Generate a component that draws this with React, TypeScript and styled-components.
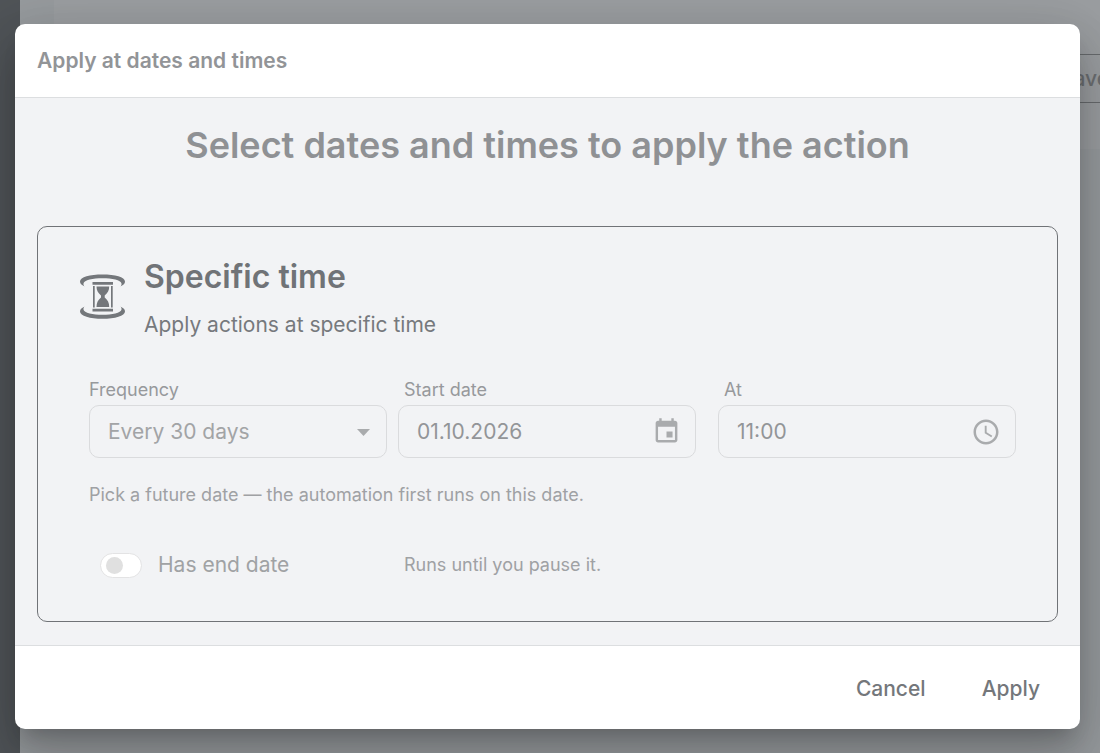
import React from "react";
import styled, { createGlobalStyle } from "styled-components";

const GlobalStyle = createGlobalStyle`
  *, *::before, *::after { box-sizing: border-box; }
  body {
    margin: 0;
    font-family: Inter, "Liberation Sans", sans-serif;
    background: #999da0;
    -webkit-font-smoothing: antialiased;
  }
  h1, h2, h3, p { margin: 0; }
  button, input, select { font-family: inherit; }
`;

const Page = styled.div`
  display: flex;
  min-height: 100vh;
`;

const SideRail = styled.nav`
  flex: 0 0 20px;
  background: #505458;
`;

const Workspace = styled.main`
  flex: 1;
  min-width: 0;
  background: #979b9e;
`;

const Toolbar = styled.div`
  display: flex;
  justify-content: flex-end;
  height: 149px;
  margin-left: 34px;
  padding-top: 54px;
  overflow: hidden;
  background: #9b9ea1;
`;

const SaveButton = styled.button`
  flex: none;
  height: 49px;
  margin-right: -32px;
  padding: 0 22px;
  border: 1px solid #686b6e;
  border-radius: 6px;
  background: transparent;
  color: #6c6f72;
  font-size: 21px;
  font-weight: 500;
`;

const Backdrop = styled.div`
  position: absolute;
  inset: 0;
  display: flex;
  align-items: flex-start;
  padding: 24px 20px 24px 15px;
`;

const Dialog = styled.section`
  flex: 1;
  min-width: 0;
  overflow: hidden;
  border-radius: 10px;
  background: #ffffff;
  box-shadow:
    0 14px 20px -9px rgba(0, 0, 0, 0.2),
    0 31px 49px 4px rgba(0, 0, 0, 0.14),
    0 12px 60px 10px rgba(0, 0, 0, 0.12);
`;

const DialogHeader = styled.header`
  padding: 22px 22px 21px;
  border-bottom: 1px solid #dcdee0;
`;

const DialogTitle = styled.h1`
  color: #929497;
  font-size: 21px;
  font-weight: 600;
  line-height: 30px;
`;

const DialogBody = styled.div`
  padding: 23px 22px;
  background: #f2f3f5;
`;

const Headline = styled.h2`
  margin-bottom: 57px;
  color: #8f9194;
  font-size: 36px;
  font-weight: 600;
  line-height: 48px;
  text-align: center;
`;

const Card = styled.section`
  padding: 25px 41px 42px 40px;
  border: 1px solid #707377;
  border-radius: 10px;
`;

const CardHeader = styled.div`
  display: flex;
  align-items: flex-start;
  gap: 16px;

  svg {
    margin-top: 20px;
  }
`;

const CardTitle = styled.h3`
  color: #707377;
  font-size: 32px;
  font-weight: 600;
  line-height: 50px;
`;

const CardText = styled.p`
  color: #76797d;
  font-size: 21px;
  line-height: 46px;
`;

const Fields = styled.div`
  display: flex;
  gap: 11px;
  margin: 29px 0 0 11px;
`;

const DateTime = styled.div`
  display: flex;
  flex: 2 1 22px;
  gap: 22px;
`;

const Field = styled.div`
  flex: 1 1 0;
  min-width: 0;
`;

const Label = styled.label<{ $inset?: boolean }>`
  display: block;
  padding: 0 0 2px ${(p) => (p.$inset ? 6 : 0)}px;
  color: #97999c;
  font-size: 18px;
  line-height: 26px;
`;

const Control = styled.div`
  display: flex;
  align-items: center;
  height: 53px;
  position: relative;
  border: 1px solid #dadbdd;
  border-radius: 10px;

  svg {
    position: absolute;
    right: 14px;
    color: #a9abad;
    pointer-events: none;
  }
`;

const Select = styled.select`
  width: 100%;
  height: 100%;
  padding: 0 50px 0 18px;
  border: 0;
  appearance: none;
  background: transparent;
  color: #a2a4a6;
  font-size: 21px;
  opacity: 1;
`;

const TextInput = styled.input`
  width: 100%;
  height: 100%;
  padding: 0 50px 0 18px;
  border: 0;
  background: transparent;
  color: #939598;
  font-size: 21px;
`;

const Note = styled.p`
  color: #9fa1a4;
  font-size: 18px;
  line-height: 28px;
`;

const FieldNote = styled(Note)`
  margin: 23px 0 42px 11px;
`;

const EndRow = styled.div`
  display: flex;
  align-items: center;
`;

const SwitchLabel = styled.label`
  display: flex;
  flex: 0 0 326px;
  align-items: center;
  gap: 16px;
  padding-left: 22px;
  color: #a0a2a4;
  font-size: 21px;
  line-height: 28px;
`;

const Switch = styled.input`
  display: flex;
  align-items: center;
  width: 42px;
  height: 25px;
  margin: 0;
  padding: 0 5px;
  appearance: none;
  border: 1px solid #e3e3e4;
  border-radius: 13px;
  background: #ffffff;

  &::before {
    content: "";
    width: 17px;
    height: 17px;
    border-radius: 50%;
    background: #e0e0e0;
  }

  &:checked {
    justify-content: flex-end;
  }
`;

const DialogFooter = styled.footer`
  display: flex;
  justify-content: flex-end;
  gap: 16px;
  padding: 18px 20px 17px;
  border-top: 1px solid #dcdee0;
`;

const TextButton = styled.button`
  height: 48px;
  padding: 0 20px;
  border: 0;
  background: transparent;
  color: #74777b;
  font-size: 21px;
  font-weight: 500;
`;

const HourglassIcon = () => (
  <svg width="50" height="50" viewBox="0 0 50 50" fill="#74777b" aria-hidden="true">
    <path d="M6.500 14.500C3.500 13 2 11.500 2 9.500 2 5 12 2.500 24.500 2.500S47 5 47 9.500c0 2-1.500 3.500-4.500 5 .8-1.200 1.200-2 1-3C43 8 34 6.300 24.500 6.300S6 8 5.500 11.500c-.2 1 .2 1.800 1 3Z" />
    <path d="M6.500 34.500C3.500 36 2 37.500 2 39.500 2 44 12 46.800 24.500 46.800S47 44 47 39.500c0-2-1.500-3.500-4.500-5 .8 1.200 1.200 2 1 3C43 41 34 42.800 24.500 42.800S6 41 5.500 37.500c-.2-1 .2-1.800 1-3Z" />
    <path d="M14.500 10H35v2.800H14.500zM14.500 36.700H35v2.800H14.500zM15 14h1.700v21.500H15zM33 14h1.700v21.500H33z" />
    <path d="M18.500 14.500h12.700c0 4-1.500 6.500-4.500 9v2c3 2.500 4.500 5 4.500 9.500H18.500c0-4.500 1.500-7 4.500-9.500v-2c-3-2.500-4.500-5-4.500-9Z" />
  </svg>
);

const CaretIcon = () => (
  <svg width="18" height="28" viewBox="0 0 18 28" fill="currentColor" aria-hidden="true">
    <path d="M3 11h13l-6.500 7z" />
  </svg>
);

const CalendarIcon = () => (
  <svg width="29" height="29" viewBox="0 0 24 24" fill="currentColor" aria-hidden="true">
    <path d="M17 12h-5v5h5v-5zM16 1v2H8V1H6v2H5c-1.110 0-1.990.9-1.990 2L3 19c0 1.100.89 2 2 2h14c1.100 0 2-.9 2-2V5c0-1.100-.9-2-2-2h-1V1h-2zm3 18H5V8h14v11z" />
  </svg>
);

const ClockIcon = () => (
  <svg width="30" height="30" viewBox="0 0 24 24" fill="currentColor" aria-hidden="true">
    <path d="M11.990 2C6.470 2 2 6.480 2 12s4.470 10 9.990 10C17.520 22 22 17.520 22 12S17.520 2 11.990 2zM12 20c-4.420 0-8-3.580-8-8s3.580-8 8-8 8 3.580 8 8-3.580 8-8 8z" />
    <path d="M12.500 7H11v6l5.250 3.150.75-1.230-4.500-2.670z" />
  </svg>
);

export default function App() {
  return (
    <>
      <GlobalStyle />
      <Page>
        <SideRail />
        <Workspace>
          <Toolbar>
            <SaveButton type="button">Save</SaveButton>
          </Toolbar>
        </Workspace>
      </Page>
      <Backdrop>
        <Dialog role="dialog" aria-modal="true" aria-labelledby="dialog-title">
          <DialogHeader>
            <DialogTitle id="dialog-title">Apply at dates and times</DialogTitle>
          </DialogHeader>
          <DialogBody>
            <Headline>Select dates and times to apply the action</Headline>
            <Card>
              <CardHeader>
                <HourglassIcon />
                <div>
                  <CardTitle>Specific time</CardTitle>
                  <CardText>Apply actions at specific time</CardText>
                </div>
              </CardHeader>
              <Fields>
                <Field>
                  <Label htmlFor="frequency">Frequency</Label>
                  <Control>
                    <Select id="frequency" defaultValue="30">
                      <option value="30">Every 30 days</option>
                    </Select>
                    <CaretIcon />
                  </Control>
                </Field>
                <DateTime>
                  <Field>
                    <Label htmlFor="start-date" $inset>Start date</Label>
                    <Control>
                      <TextInput id="start-date" type="text" defaultValue="01.10.2026" />
                      <CalendarIcon />
                    </Control>
                  </Field>
                  <Field>
                    <Label htmlFor="at-time" $inset>At</Label>
                    <Control>
                      <TextInput id="at-time" type="text" defaultValue="11:00" />
                      <ClockIcon />
                    </Control>
                  </Field>
                </DateTime>
              </Fields>
              <FieldNote>Pick a future date — the automation first runs on this date.</FieldNote>
              <EndRow>
                <SwitchLabel>
                  <Switch type="checkbox" role="switch" />
                  Has end date
                </SwitchLabel>
                <Note>Runs until you pause it.</Note>
              </EndRow>
            </Card>
          </DialogBody>
          <DialogFooter>
            <TextButton type="button">Cancel</TextButton>
            <TextButton type="button">Apply</TextButton>
          </DialogFooter>
        </Dialog>
      </Backdrop>
    </>
  );
}
